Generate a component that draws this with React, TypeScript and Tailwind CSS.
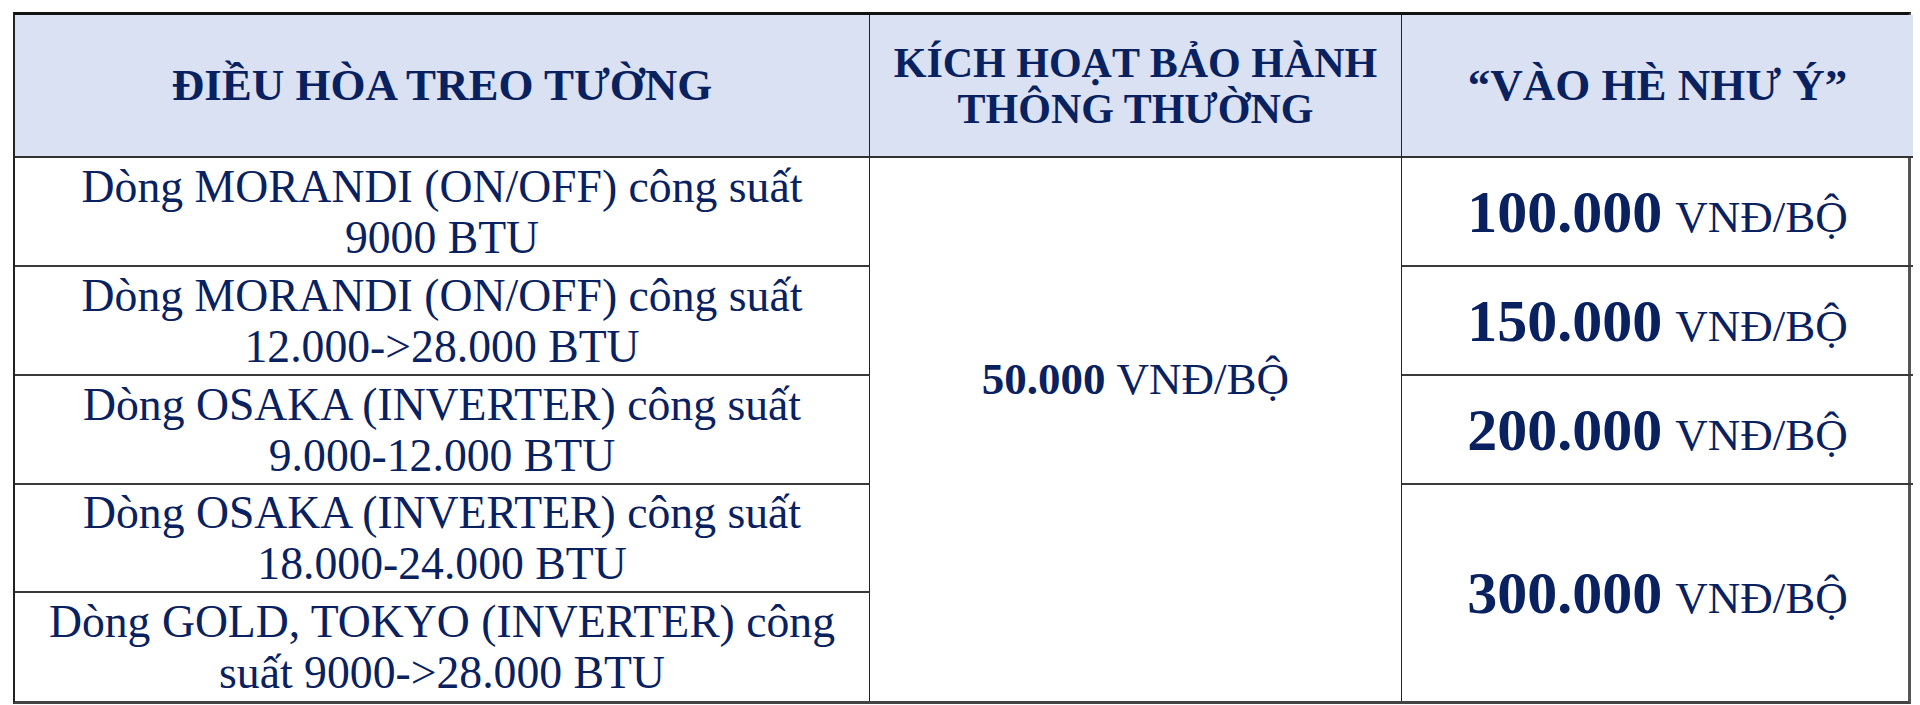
import React from "react";

const rowsLeft = [
  ["Dòng MORANDI (ON/OFF) công suất", "9000 BTU"],
  ["Dòng MORANDI (ON/OFF) công suất", "12.000->28.000 BTU"],
  ["Dòng OSAKA (INVERTER) công suất", "9.000-12.000 BTU"],
  ["Dòng OSAKA (INVERTER) công suất", "18.000-24.000 BTU"],
  ["Dòng GOLD, TOKYO (INVERTER) công", "suất 9000->28.000 BTU"],
];

function Price({ value }: { value: string }) {
  return (
    <div className="flex items-baseline justify-center whitespace-nowrap">
      <span className="text-[60px] font-bold leading-none">{value}</span>
      <span className="ml-[13px] text-[45px] leading-none">VNĐ/BỘ</span>
    </div>
  );
}

export default function App() {
  return (
    <div
      className="min-h-[705px] w-[1920px] bg-white pl-[13px] pt-[12px] text-[#0a2160]"
      style={{ fontFamily: '"Liberation Serif", "Times New Roman", serif' }}
    >
      <div className="grid w-[1898px] grid-cols-[855px_532px_511px] grid-rows-[143px_109px_109px_109px_108px_108px] border-l-[2px] border-t-[3px] border-l-[#222] border-t-[#111] border-b-[3px] border-b-[#444] border-r-[3px] border-r-[#555]">
        {/* header */}
        <div className="flex items-center justify-center border-b-[2px] border-r border-b-[#333] border-r-[#222] bg-[#d9e1f2] text-[45px] font-bold leading-[51px]">
          ĐIỀU HÒA TREO TƯỜNG
        </div>
        <div className="flex flex-col items-center justify-center border-b-[2px] border-r border-b-[#333] border-r-[#222] bg-[#d9e1f2] text-[42px] font-bold leading-[46px]">
          <span>KÍCH HOẠT BẢO HÀNH</span>
          <span>THÔNG THƯỜNG</span>
        </div>
        <div className="flex items-center justify-center border-b-[2px] border-b-[#333] bg-[#d9e1f2] text-[45px] font-bold leading-[51px]">
          “VÀO HÈ NHƯ Ý”
        </div>

        {/* left column rows */}
        {rowsLeft.map((r, i) => (
          <div
            key={i}
            className={`col-start-1 flex flex-col items-center justify-center border-r border-r-[#222] text-[45.7px] leading-[51px] ${
              i < 4 ? "border-b-[2px] border-b-[#3a3a3a]" : ""
            }`}
            style={{ gridRowStart: i + 2 }}
          >
            <span>{r[0]}</span>
            <span>{r[1]}</span>
          </div>
        ))}

        {/* middle merged */}
        <div className="col-start-2 row-start-2 row-end-7 flex items-center justify-center border-r border-r-[#222] pb-[100px] text-[45px] leading-[51px]">
          <span className="font-bold">50.000</span>
          <span className="ml-[11px]">VNĐ/BỘ</span>
        </div>

        {/* right column */}
        <div className="col-start-3 row-start-2 flex items-center justify-center border-b-[2px] border-b-[#3a3a3a]">
          <Price value="100.000" />
        </div>
        <div className="col-start-3 row-start-3 flex items-center justify-center border-b-[2px] border-b-[#3a3a3a]">
          <Price value="150.000" />
        </div>
        <div className="col-start-3 row-start-4 flex items-center justify-center border-b-[2px] border-b-[#3a3a3a]">
          <Price value="200.000" />
        </div>
        <div className="col-start-3 row-start-5 row-end-7 flex items-center justify-center">
          <Price value="300.000" />
        </div>
      </div>
    </div>
  );
}
